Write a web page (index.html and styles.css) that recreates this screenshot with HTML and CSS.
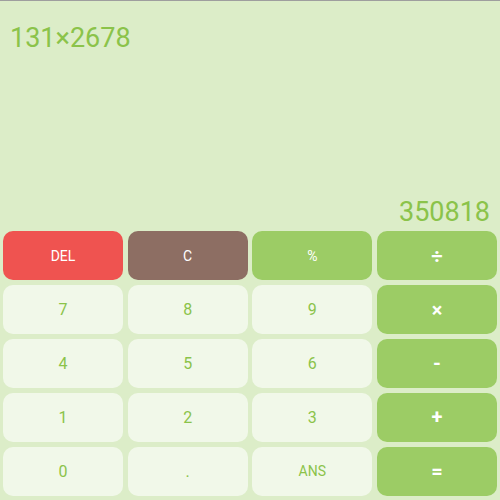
FILE: index.html
```html
<!DOCTYPE html>
<html>
<head>
<meta charset="utf-8">
<link rel="stylesheet" href="styles.css">
</head>
<body>
<div class="app">
  <div class="display">
    <div class="expr">131×2678</div>
    <div class="result">350818</div>
  </div>
  <div class="keypad">
    <div class="key red small">DEL</div>
    <div class="key brown small">C</div>
    <div class="key op small">%</div>
    <div class="key op">÷</div>
    <div class="key num">7</div>
    <div class="key num">8</div>
    <div class="key num">9</div>
    <div class="key op">×</div>
    <div class="key num">4</div>
    <div class="key num">5</div>
    <div class="key num">6</div>
    <div class="key op">-</div>
    <div class="key num">1</div>
    <div class="key num">2</div>
    <div class="key num">3</div>
    <div class="key op">+</div>
    <div class="key num">0</div>
    <div class="key num">.</div>
    <div class="key num small">ANS</div>
    <div class="key op">=</div>
  </div>
</div>
</body>
</html>
```
FILE: styles.css
```css
html, body {
  margin: 0;
  padding: 0;
}
body {
  background: #DCEDC8;
  font-family: Roboto, "Liberation Sans", sans-serif;
}
.app {
  height: 500px;
  display: flex;
  flex-direction: column;
  border-top: 1px solid #9e9e9e;
  box-sizing: border-box;
}
.display {
  flex: 1;
  display: flex;
  flex-direction: column;
  justify-content: space-between;
  padding: 22px 10px 1px 10px;
  color: #8BC34A;
  font-size: 27px;
  line-height: 30px;
}
.result {
  text-align: right;
}
.keypad {
  height: 272px;
  box-sizing: border-box;
  padding: 3px 3px 4px 3px;
  display: grid;
  grid-template-columns: repeat(4, 1fr);
  grid-template-rows: repeat(5, 1fr);
  gap: 4.67px;
}
.key {
  border-radius: 10px;
  display: flex;
  align-items: center;
  justify-content: center;
  font-size: 20px;
  color: #fff;
}
.op {
  background: #9CCC65;
  font-weight: bold;
}
.key.small {
  font-size: 14px;
  font-weight: normal;
}
.num {
  background: #F1F8E9;
  color: #8BC34A;
  font-size: 16px;
}
.red {
  background: #EF5350;
}
.brown {
  background: #8D6E63;
}
```
